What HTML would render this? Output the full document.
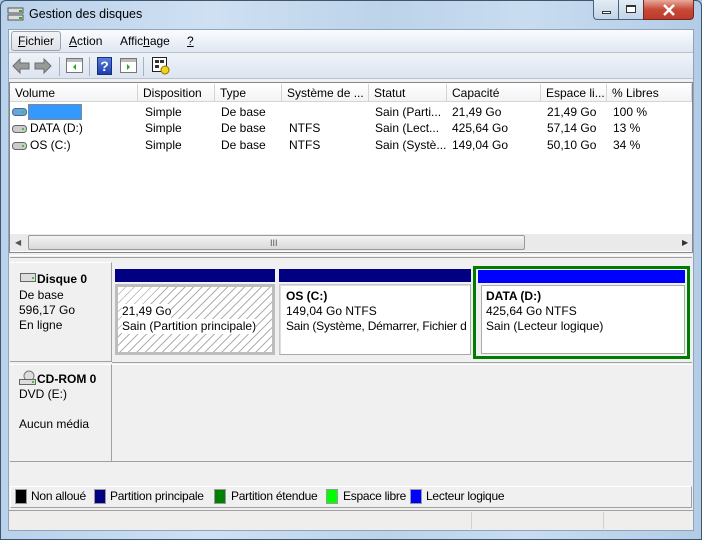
<!DOCTYPE html>
<html><head><meta charset="utf-8"><style>
*{margin:0;padding:0;box-sizing:border-box}
body{width:702px;height:540px;position:relative;overflow:hidden;font-family:"Liberation Sans",sans-serif;font-size:12px;color:#000;background:#a9c6e4}
.a{position:absolute}
.t{position:absolute;white-space:nowrap;line-height:15px}
.hdr{position:absolute;top:84px;height:18px;border-right:1px solid #d5d5d5;background:linear-gradient(#fff,#f1f2f4);padding:2px 0 0 5px;line-height:14px;white-space:nowrap;overflow:hidden}
.lg{letter-spacing:-0.25px}
</style></head><body>
<div class="a" style="left:0;top:0;width:702px;height:540px;background:linear-gradient(90deg,#b9d1ea 0%,#cfe0f2 30%,#bcd3ea 55%,#c9dcf0 75%,#b3cce6 100%);border:1px solid #3f5670;border-radius:6px 6px 0 0"></div>
<svg class="a" style="left:7px;top:6px" width="18" height="18"><rect x="1" y="2" width="15" height="5" fill="#ddd" stroke="#555"/><rect x="1" y="9" width="15" height="5" fill="#ddd" stroke="#555"/><rect x="12" y="4" width="3" height="2" fill="#3a3"/><rect x="12" y="11" width="3" height="2" fill="#3a3"/></svg>
<div class="t" style="left:29px;top:7px;font-size:12.5px">Gestion des disques</div>
<div class="a" style="left:593px;top:0;width:26px;height:20px;border:1px solid #4b6180;border-top:none;border-radius:0 0 0 4px;background:linear-gradient(#e3ecf6,#c2d4e8)"></div>
<div class="a" style="left:602px;top:11px;width:9px;height:3px;border:1px solid #333;background:#fff"></div>
<div class="a" style="left:618px;top:0;width:26px;height:20px;border:1px solid #4b6180;border-top:none;background:linear-gradient(#e3ecf6,#c2d4e8)"></div>
<div class="a" style="left:626px;top:5px;width:10px;height:8px;border:1px solid #333;border-top-width:2px;background:#fff"></div>
<div class="a" style="left:643px;top:0;width:51px;height:20px;border:1px solid #6b2a22;border-top:none;border-radius:0 0 4px 0;background:linear-gradient(#e9a99c,#c74a36 50%,#c0392b)"></div>
<svg class="a" style="left:662px;top:4px" width="14" height="12"><path d="M2 1 L12 11 M12 1 L2 11" stroke="#fff" stroke-width="2.5"/></svg>
<div class="a" style="left:8px;top:29px;width:686px;height:502px;background:#f0f0f0;border:1px solid #8ea4bd"></div>
<div class="a" style="left:9px;top:30px;width:684px;height:23px;background:linear-gradient(#fbfcfe,#dfe7f3);border-bottom:1px solid #b9c3d0"></div>
<div class="a" style="left:11px;top:31px;width:50px;height:20px;border:1px solid #9ba4ae;border-radius:3px;background:linear-gradient(#f3f4f6,#dde1e6)"></div>
<div class="t" style="left:18px;top:34px"><u>F</u>ichier</div>
<div class="t" style="left:69px;top:34px"><u>A</u>ction</div>
<div class="t" style="left:120px;top:34px">Affic<u>h</u>age</div>
<div class="t" style="left:187px;top:34px"><u>?</u></div>
<div class="a" style="left:9px;top:54px;width:684px;height:25px;background:linear-gradient(#eef2f9,#dde5f1);border-bottom:1px solid #b9c3d0"></div>
<svg class="a" style="left:12px;top:57px" width="44" height="18"><path d="M1 9 L8 2 L8 6 L17 6 L17 12 L8 12 L8 16 Z" fill="#9a9a9a" stroke="#6e6e6e"/><path d="M39 9 L32 2 L32 6 L23 6 L23 12 L32 12 L32 16 Z" fill="#9a9a9a" stroke="#6e6e6e"/></svg>
<div class="a" style="left:59px;top:57px;width:1px;height:19px;background:#a8b2bf"></div>
<svg class="a" style="left:66px;top:58px" width="18" height="16"><rect x="0.5" y="0.5" width="16" height="14" fill="#fff" stroke="#777"/><rect x="1" y="1" width="15" height="3" fill="#bbb"/><path d="M10 6 L7 9 L10 12Z" fill="#2a2"/></svg>
<div class="a" style="left:89px;top:57px;width:1px;height:19px;background:#a8b2bf"></div>
<div class="a" style="left:97px;top:57px;width:15px;height:18px;background:linear-gradient(#5b7de0,#1d3ea8);border:1px solid #12307f;color:#fff;font-weight:bold;font-size:14px;text-align:center;line-height:16px">?</div>
<svg class="a" style="left:120px;top:58px" width="18" height="16"><rect x="0.5" y="0.5" width="16" height="14" fill="#fff" stroke="#777"/><rect x="1" y="1" width="15" height="3" fill="#bbb"/><path d="M7 6 L10 9 L7 12Z" fill="#2a2"/></svg>
<div class="a" style="left:143px;top:57px;width:1px;height:19px;background:#a8b2bf"></div>
<svg class="a" style="left:152px;top:57px" width="18" height="18"><rect x="0.5" y="0.5" width="14" height="14" fill="#fff" stroke="#222"/><rect x="3" y="3" width="4" height="3" fill="#333"/><rect x="8" y="3" width="4" height="3" fill="#333"/><rect x="3" y="8" width="4" height="3" fill="#333"/><circle cx="13" cy="13" r="4" fill="#f3d21a" stroke="#8a7300"/></svg>
<div class="a" style="left:9px;top:82px;width:684px;height:171px;background:#fff;border:1px solid #828790"></div>
<div class="hdr" style="left:10px;width:128px">Volume</div>
<div class="hdr" style="left:138px;width:77px">Disposition</div>
<div class="hdr" style="left:215px;width:67px">Type</div>
<div class="hdr" style="left:282px;width:87px">Système de ...</div>
<div class="hdr" style="left:369px;width:78px">Statut</div>
<div class="hdr" style="left:447px;width:94px">Capacité</div>
<div class="hdr" style="left:541px;width:66px">Espace li...</div>
<div class="hdr" style="left:607px;width:85px">% Libres</div>
<div class="a" style="left:10px;top:101px;width:682px;height:1px;background:#d5d5d5"></div>
<svg class="a" style="left:12px;top:107px" width="16" height="10"><rect x="0.5" y="1.5" width="14" height="7" rx="3" fill="#6aa3d8" stroke="#3b6e9f"/><rect x="10" y="4" width="2" height="2" fill="#3c3"/></svg>
<div class="a" style="left:28px;top:104px;width:54px;height:16px;background:#3399ff;border:1px dotted #c87d2c"></div>
<svg class="a" style="left:12px;top:124px" width="16" height="10"><rect x="0.5" y="1.5" width="14" height="7" rx="3" fill="#ccc" stroke="#666"/><rect x="10" y="4" width="2" height="2" fill="#3c3"/></svg>
<svg class="a" style="left:12px;top:141px" width="16" height="10"><rect x="0.5" y="1.5" width="14" height="7" rx="3" fill="#ccc" stroke="#666"/><rect x="10" y="4" width="2" height="2" fill="#3c3"/></svg>
<div class="t" style="left:30px;top:121px">DATA (D:)</div>
<div class="t" style="left:30px;top:138px">OS (C:)</div>
<div class="t" style="left:145px;top:105px">Simple</div><div class="t" style="left:221px;top:105px">De base</div><div class="t" style="left:375px;top:105px">Sain (Parti...</div><div class="t" style="left:452px;top:105px">21,49 Go</div><div class="t" style="left:547px;top:105px">21,49 Go</div><div class="t" style="left:613px;top:105px">100 %</div>
<div class="t" style="left:145px;top:121px">Simple</div><div class="t" style="left:221px;top:121px">De base</div><div class="t" style="left:289px;top:121px">NTFS</div><div class="t" style="left:375px;top:121px">Sain (Lect...</div><div class="t" style="left:452px;top:121px">425,64 Go</div><div class="t" style="left:547px;top:121px">57,14 Go</div><div class="t" style="left:613px;top:121px">13 %</div>
<div class="t" style="left:145px;top:138px">Simple</div><div class="t" style="left:221px;top:138px">De base</div><div class="t" style="left:289px;top:138px">NTFS</div><div class="t" style="left:375px;top:138px">Sain (Systè...</div><div class="t" style="left:452px;top:138px">149,04 Go</div><div class="t" style="left:547px;top:138px">50,10 Go</div><div class="t" style="left:613px;top:138px">34 %</div>
<div class="a" style="left:10px;top:234px;width:682px;height:17px;background:#eaeaea"></div>
<div class="t" style="left:15px;top:235px;font-size:8px;color:#555">◀</div>
<div class="t" style="left:682px;top:235px;font-size:8px;color:#333">▶</div>
<div class="a" style="left:28px;top:235px;width:497px;height:15px;border:1px solid #999;border-radius:2px;background:linear-gradient(#f4f4f4,#d8d8d8)"></div>
<div class="t" style="left:270px;top:236px;font-size:9px;color:#555">III</div>
<div class="a" style="left:10px;top:255px;width:682px;height:3px;border-top:1px solid #fff;border-bottom:1px solid #a0a0a0"></div>
<div class="a" style="left:10px;top:260px;width:682px;height:202px;border-bottom:1px solid #a0a0a0"></div>
<div class="a" style="left:10px;top:262px;width:102px;height:100px;border-right:1px solid #a0a0a0;border-bottom:1px solid #a0a0a0;border-top:1px solid #fff"></div>
<div class="a" style="left:112px;top:362px;width:580px;height:1px;background:#a0a0a0"></div>
<div class="a" style="left:112px;top:364px;width:580px;height:1px;background:#fff"></div>
<div class="a" style="left:10px;top:364px;width:102px;height:98px;border-right:1px solid #a0a0a0;border-top:1px solid #fff"></div>
<svg class="a" style="left:20px;top:273px" width="17" height="10"><rect x="0.5" y="0.5" width="15" height="8" fill="#ddd" stroke="#666"/><rect x="12" y="4" width="2" height="2" fill="#3c3"/></svg>
<div class="t" style="left:37px;top:272px;font-weight:bold">Disque 0</div>
<div class="t" style="left:19px;top:288px">De base</div>
<div class="t" style="left:19px;top:303px">596,17 Go</div>
<div class="t" style="left:19px;top:318px">En ligne</div>
<svg class="a" style="left:19px;top:369px" width="18" height="17"><circle cx="10" cy="7" r="5" fill="#ddd" stroke="#777"/><rect x="0.5" y="10.5" width="16" height="5" fill="#ddd" stroke="#666"/><rect x="13" y="12" width="2" height="2" fill="#3c3"/></svg>
<div class="t" style="left:37px;top:372px;font-weight:bold">CD-ROM 0</div>
<div class="t" style="left:19px;top:387px">DVD (E:)</div>
<div class="t" style="left:19px;top:417px">Aucun média</div>
<div class="a" style="left:115px;top:269px;width:160px;height:13px;background:#000080"></div>
<div class="a" style="left:115px;top:284px;width:160px;height:71px;border:3px solid #bdbdbd;background:repeating-linear-gradient(135deg,#fff 0,#fff 5px,#b0b0b0 5px,#b0b0b0 6px)"></div>
<div class="t" style="left:122px;top:304px;background:#fff">21,49 Go</div>
<div class="t" style="left:122px;top:319px;background:#fff">Sain (Partition principale)</div>
<div class="a" style="left:279px;top:269px;width:192px;height:13px;background:#000080"></div>
<div class="a" style="left:279px;top:284px;width:192px;height:71px;border:1px solid #c8c8c8;border-right-color:#aaa;border-bottom-color:#aaa;background:#fff;box-shadow:inset 1px 1px 0 #ddd"></div>
<div class="t" style="left:286px;top:289px;font-weight:bold">OS  (C:)</div>
<div class="t" style="left:286px;top:304px">149,04 Go NTFS</div>
<div class="t" style="left:286px;top:319px;width:180px;overflow:hidden;letter-spacing:-0.2px">Sain (Système, Démarrer, Fichier d</div>
<div class="a" style="left:473px;top:266px;width:217px;height:93px;border:3px solid #007c00;background:#f0f0f0"></div>
<div class="a" style="left:478px;top:270px;width:207px;height:13px;background:#0000ff"></div>
<div class="a" style="left:481px;top:285px;width:204px;height:69px;border:1px solid #aaa;background:#fff"></div>
<div class="t" style="left:486px;top:289px;font-weight:bold">DATA  (D:)</div>
<div class="t" style="left:486px;top:304px">425,64 Go NTFS</div>
<div class="t" style="left:486px;top:319px">Sain (Lecteur logique)</div>
<div class="a" style="left:10px;top:486px;width:682px;height:22px;border:1px solid #a0a0a0;border-left-color:#fff;border-top-color:#fff"></div>
<div class="a" style="left:16px;top:490px;width:10px;height:13px;background:#000;outline:1px solid #999"></div>
<div class="t lg" style="left:31px;top:489px">Non alloué</div>
<div class="a" style="left:95px;top:490px;width:10px;height:13px;background:#000080;outline:1px solid #999"></div>
<div class="t lg" style="left:110px;top:489px">Partition principale</div>
<div class="a" style="left:215px;top:490px;width:10px;height:13px;background:#008000;outline:1px solid #999"></div>
<div class="t lg" style="left:231px;top:489px">Partition étendue</div>
<div class="a" style="left:327px;top:490px;width:10px;height:13px;background:#00ff00;outline:1px solid #999"></div>
<div class="t lg" style="left:343px;top:489px">Espace libre</div>
<div class="a" style="left:411px;top:490px;width:10px;height:13px;background:#0000ff;outline:1px solid #999"></div>
<div class="t lg" style="left:426px;top:489px">Lecteur logique</div>
<div class="a" style="left:9px;top:510px;width:684px;height:20px;border-top:1px solid #a0a0a0;background:#f0eeec"></div>
<div class="a" style="left:471px;top:512px;width:1px;height:17px;background:#d0d0d0"></div>
<div class="a" style="left:603px;top:512px;width:1px;height:17px;background:#d0d0d0"></div>
</body></html>
